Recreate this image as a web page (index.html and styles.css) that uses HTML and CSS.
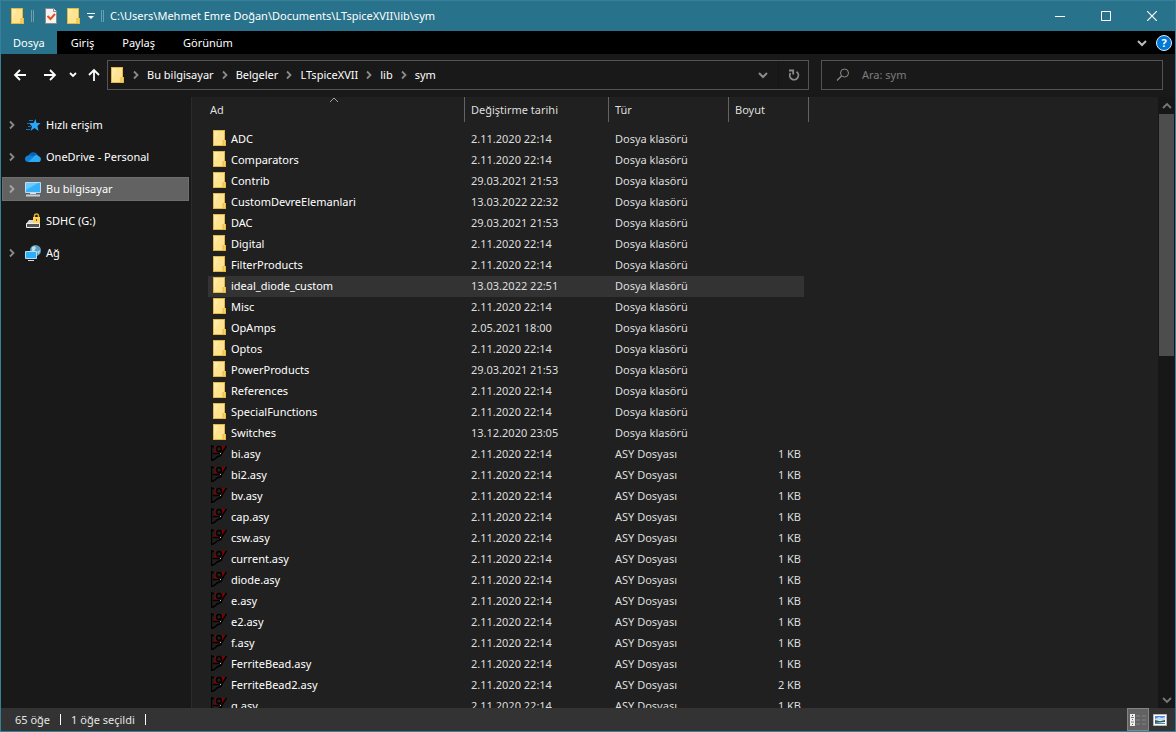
FILE: index.html
```html
<!DOCTYPE html>
<html lang="tr">
<head>
<meta charset="utf-8">
<title>sym</title>
<link rel="stylesheet" href="styles.css">
</head>
<body>
<svg class="defs" aria-hidden="true">
  <symbol id="folder" viewBox="0 0 16 16">
    <path d="M2 0h12v10h1v6H2z" fill="#e3b93f"/>
    <path d="M3 1h10v14H3z" fill="#ffe391"/>
    <path d="M3 1h5L3 12z" fill="#ffeba8"/>
    <path d="M12 10h2v5h-2z" fill="#f7d366"/>
    <path d="M12 10v5" stroke="#e3b93f" fill="none"/>
  </symbol>
  <symbol id="asy" viewBox="0 0 16 16">
    <path d="M2 8l2-2V1h3l-1 3 1 4zM9 1h6l-4 7-1-2 1-3z" fill="#850000"/>
    <path d="M.5 0v16M1 15.500l3-1.500 2-2 4-1.500 1.500-3.500L15.500 1M1 1.500h2M2 8.500h8" fill="none" stroke="#000" stroke-width="1.500"/>
    <circle cx="8" cy="4" r="2.500" fill="#202020" stroke="#000" stroke-width="1.500"/>
    <path d="M9 8h1v1H9z" fill="#c8c8c8"/>
  </symbol>
  <symbol id="chevron" viewBox="0 0 8 10"><path d="M2 1.500L5.500 5 2 8.500" fill="none" stroke="currentColor" stroke-width="1.800"/></symbol>
  <symbol id="down" viewBox="0 0 10 8"><path d="M1 2l4 4 4-4" fill="none" stroke="currentColor" stroke-width="2"/></symbol>
</svg>
<div class="window">
  <header class="titlebar">
    <svg class="icon"><use href="#folder"/></svg>
    <span class="grip"></span>
    <button class="quick" aria-label="Özellikler"><svg class="icon" viewBox="0 0 16 16"><path d="M2.500.5h8l3 3v12h-11z" fill="#f3f3f3" stroke="#8b8b8b"/><path d="M10.500.5v3h3" fill="#fff" stroke="#8b8b8b"/><path d="M4.500 8l3 3 4.500-5" fill="none" stroke="#e8501e" stroke-width="2"/></svg></button>
    <button class="quick" aria-label="Yeni klasör"><svg class="icon"><use href="#folder"/></svg></button>
    <button class="quick customize" aria-label="Özelleştir"><svg class="small" viewBox="0 0 8 8"><path d="M0 1.500h8" stroke="#fff"/><path d="M1 4h6L4 7z" fill="#fff"/></svg></button>
    <span class="grip"></span>
    <h1 class="title">C:\Users\Mehmet Emre Doğan\Documents\LTspiceXVII\lib\sym</h1>
    <button class="caption" aria-label="Simge durumuna küçült"><svg viewBox="0 0 10 10"><path d="M0 5.500h10" stroke="#fff"/></svg></button>
    <button class="caption" aria-label="Ekranı kapla"><svg viewBox="0 0 10 10"><path d="M.5.5h9v9h-9z" fill="none" stroke="#fff"/></svg></button>
    <button class="caption" aria-label="Kapat"><svg viewBox="0 0 10 10"><path d="M0 0l10 10M10 0L0 10" stroke="#fff" stroke-width="1.200"/></svg></button>
  </header>
  <nav class="menubar">
    <button class="menu menu-active">Dosya</button>
    <button class="menu">Giriş</button>
    <button class="menu">Paylaş</button>
    <button class="menu">Görünüm</button>
    <span class="spacer"></span>
    <button class="expand" aria-label="Şeridi genişlet"><svg class="arrow"><use href="#down"/></svg></button>
    <button class="help" aria-label="Yardım">?</button>
  </nav>
  <div class="navbar">
    <div class="history">
      <button class="go" aria-label="Geri"><svg viewBox="0 0 14 12"><path d="M13 6H2M7 1L2 6l5 5" fill="none" stroke="#fff" stroke-width="1.800"/></svg></button>
      <button class="go" aria-label="İleri"><svg viewBox="0 0 14 12"><path d="M1 6h11M7 1l5 5-5 5" fill="none" stroke="#fff" stroke-width="1.800"/></svg></button>
      <button class="recent" aria-label="Son konumlar"><svg viewBox="0 0 10 8"><path d="M2 2l3 3 3-3" fill="none" stroke="#fff" stroke-width="1.800"/></svg></button>
      <button class="up" aria-label="Yukarı"><svg viewBox="0 0 12 14"><path d="M6 13V2M1 7l5-5 5 5" fill="none" stroke="#fff" stroke-width="1.800"/></svg></button>
    </div>
    <div class="address">
      <svg class="icon"><use href="#folder"/></svg>
      <svg class="sep"><use href="#chevron"/></svg>
      <button class="crumb">Bu bilgisayar</button>
      <svg class="sep"><use href="#chevron"/></svg>
      <button class="crumb">Belgeler</button>
      <svg class="sep"><use href="#chevron"/></svg>
      <button class="crumb">LTspiceXVII</button>
      <svg class="sep"><use href="#chevron"/></svg>
      <button class="crumb">lib</button>
      <svg class="sep"><use href="#chevron"/></svg>
      <button class="crumb">sym</button>
      <span class="spacer"></span>
      <button class="tool" aria-label="Önceki konumlar"><svg class="arrow"><use href="#down"/></svg></button>
      <button class="tool refresh" aria-label="Yenile"><svg class="reload" viewBox="0 0 12 12"><path d="M8.500 2.800A4.300 4.300 0 1 1 2.500 4M1 1.500h4.200v4" fill="none" stroke="#8c8c8c" stroke-width="1.800"/></svg></button>
    </div>
    <label class="search">
      <svg class="lens" viewBox="0 0 14 14"><circle cx="8.500" cy="5" r="4" fill="none" stroke="#8a8a8a"/><path d="M5.500 8L1 12.500" stroke="#8a8a8a" stroke-width="1.200"/></svg>
      <input type="text" placeholder="Ara: sym" aria-label="Ara: sym">
    </label>
  </div>
  <div class="body">
    <aside class="tree">
      <a class="node" href="#"><svg class="sep"><use href="#chevron"/></svg><svg class="icon" viewBox="0 0 16 16"><path d="M10.500 2l1 4h4l-3 3 1 5-4-3-4 3 1.500-4.500L4 6h4.500z" fill="#2ba5f7"/><path d="M4 3.500h4M2 6.500h3M3 9.500h3M1 12.500h4" stroke="#1674c4"/></svg>Hızlı erişim</a>
      <a class="node" href="#"><svg class="sep"><use href="#chevron"/></svg><svg class="icon" viewBox="0 0 16 16"><path d="M3.500 7a5 5 0 0 1 9-1.500L9 10z" fill="#0a63b8"/><path d="M3 6.500c3-1 5 1 8 3L3 13C-1 12.500-1 7.500 3 6.500z" fill="#1180dc"/><path d="M8 8.500c1-3 5-3.500 6-1 2.500.5 2.500 5 0 5.500H3z" fill="#2ba9f2"/></svg>OneDrive - Personal</a>
      <a class="node selected" href="#"><svg class="sep"><use href="#chevron"/></svg><svg class="icon" viewBox="0 0 16 16"><path d="M.5 1.500h15v10H.5z" fill="#35b2fb" stroke="#b6ddf3"/><path d="M1 2h12L1 9z" fill="#6bcaff"/><path d="M5 12.500h6" stroke="#e0e6ea"/><path d="M1 14.500h14" stroke="#c3d0da" stroke-width="2"/></svg>Bu bilgisayar</a>
      <a class="node" href="#"><span class="sep"></span><svg class="icon" viewBox="0 0 16 16"><path d="M4 7h9l2 4H1z" fill="#d8d8d8"/><path d="M1.500 10.500h13v4h-13z" fill="#555" stroke="#ededed"/><path d="M9.500 5V3a2 2 0 0 1 4 0v2" fill="none" stroke="#e3b02c" stroke-width="1.500"/><path d="M8 4h7v6H8z" fill="#ffd35a"/><path d="M11 6h1v2h-1z" fill="#6a5010"/></svg>SDHC (G:)</a>
      <a class="node" href="#"><svg class="sep"><use href="#chevron"/></svg><svg class="icon" viewBox="0 0 16 16"><circle cx="10.500" cy="5.500" r="5.500" fill="#5c9dbd"/><path d="M7 2c3-2 5 0 3 3S6 6 7 2zM12 7l3-2-1 4z" fill="#b9deea"/><path d="M.5 6.500h11v7H.5z" fill="#2fadf9" stroke="#b6ddf3"/><path d="M3 15.500h6" stroke="#d5dde2"/></svg>Ağ</a>
    </aside>
    <main class="files">
      <table class="list">
        <colgroup><col class="c-name"><col class="c-date"><col class="c-type"><col class="c-size"></colgroup>
        <thead><tr>
          <th aria-sort="ascending"><button class="head">Ad<svg class="sort" viewBox="0 0 10 6"><path d="M1 5l4-4 4 4" fill="none" stroke="#a0a0a0"/></svg></button></th>
          <th><button class="head">Değiştirme tarihi</button></th>
          <th><button class="head">Tür</button></th>
          <th><button class="head">Boyut</button></th>
        </tr></thead>
        <tbody>
        <tr><td><svg class="icon"><use href="#folder"/></svg>ADC</td><td>2.11.2020 22:14</td><td>Dosya klasörü</td><td></td></tr>
        <tr><td><svg class="icon"><use href="#folder"/></svg>Comparators</td><td>2.11.2020 22:14</td><td>Dosya klasörü</td><td></td></tr>
        <tr><td><svg class="icon"><use href="#folder"/></svg>Contrib</td><td>29.03.2021 21:53</td><td>Dosya klasörü</td><td></td></tr>
        <tr><td><svg class="icon"><use href="#folder"/></svg>CustomDevreElemanlari</td><td>13.03.2022 22:32</td><td>Dosya klasörü</td><td></td></tr>
        <tr><td><svg class="icon"><use href="#folder"/></svg>DAC</td><td>29.03.2021 21:53</td><td>Dosya klasörü</td><td></td></tr>
        <tr><td><svg class="icon"><use href="#folder"/></svg>Digital</td><td>2.11.2020 22:14</td><td>Dosya klasörü</td><td></td></tr>
        <tr><td><svg class="icon"><use href="#folder"/></svg>FilterProducts</td><td>2.11.2020 22:14</td><td>Dosya klasörü</td><td></td></tr>
        <tr class="current"><td><svg class="icon"><use href="#folder"/></svg>ideal_diode_custom</td><td>13.03.2022 22:51</td><td>Dosya klasörü</td><td></td></tr>
        <tr><td><svg class="icon"><use href="#folder"/></svg>Misc</td><td>2.11.2020 22:14</td><td>Dosya klasörü</td><td></td></tr>
        <tr><td><svg class="icon"><use href="#folder"/></svg>OpAmps</td><td>2.05.2021 18:00</td><td>Dosya klasörü</td><td></td></tr>
        <tr><td><svg class="icon"><use href="#folder"/></svg>Optos</td><td>2.11.2020 22:14</td><td>Dosya klasörü</td><td></td></tr>
        <tr><td><svg class="icon"><use href="#folder"/></svg>PowerProducts</td><td>29.03.2021 21:53</td><td>Dosya klasörü</td><td></td></tr>
        <tr><td><svg class="icon"><use href="#folder"/></svg>References</td><td>2.11.2020 22:14</td><td>Dosya klasörü</td><td></td></tr>
        <tr><td><svg class="icon"><use href="#folder"/></svg>SpecialFunctions</td><td>2.11.2020 22:14</td><td>Dosya klasörü</td><td></td></tr>
        <tr><td><svg class="icon"><use href="#folder"/></svg>Switches</td><td>13.12.2020 23:05</td><td>Dosya klasörü</td><td></td></tr>
        <tr><td><svg class="icon"><use href="#asy"/></svg>bi.asy</td><td>2.11.2020 22:14</td><td>ASY Dosyası</td><td>1 KB</td></tr>
        <tr><td><svg class="icon"><use href="#asy"/></svg>bi2.asy</td><td>2.11.2020 22:14</td><td>ASY Dosyası</td><td>1 KB</td></tr>
        <tr><td><svg class="icon"><use href="#asy"/></svg>bv.asy</td><td>2.11.2020 22:14</td><td>ASY Dosyası</td><td>1 KB</td></tr>
        <tr><td><svg class="icon"><use href="#asy"/></svg>cap.asy</td><td>2.11.2020 22:14</td><td>ASY Dosyası</td><td>1 KB</td></tr>
        <tr><td><svg class="icon"><use href="#asy"/></svg>csw.asy</td><td>2.11.2020 22:14</td><td>ASY Dosyası</td><td>1 KB</td></tr>
        <tr><td><svg class="icon"><use href="#asy"/></svg>current.asy</td><td>2.11.2020 22:14</td><td>ASY Dosyası</td><td>1 KB</td></tr>
        <tr><td><svg class="icon"><use href="#asy"/></svg>diode.asy</td><td>2.11.2020 22:14</td><td>ASY Dosyası</td><td>1 KB</td></tr>
        <tr><td><svg class="icon"><use href="#asy"/></svg>e.asy</td><td>2.11.2020 22:14</td><td>ASY Dosyası</td><td>1 KB</td></tr>
        <tr><td><svg class="icon"><use href="#asy"/></svg>e2.asy</td><td>2.11.2020 22:14</td><td>ASY Dosyası</td><td>1 KB</td></tr>
        <tr><td><svg class="icon"><use href="#asy"/></svg>f.asy</td><td>2.11.2020 22:14</td><td>ASY Dosyası</td><td>1 KB</td></tr>
        <tr><td><svg class="icon"><use href="#asy"/></svg>FerriteBead.asy</td><td>2.11.2020 22:14</td><td>ASY Dosyası</td><td>1 KB</td></tr>
        <tr><td><svg class="icon"><use href="#asy"/></svg>FerriteBead2.asy</td><td>2.11.2020 22:14</td><td>ASY Dosyası</td><td>2 KB</td></tr>
        <tr><td><svg class="icon"><use href="#asy"/></svg>g.asy</td><td>2.11.2020 22:14</td><td>ASY Dosyası</td><td>1 KB</td></tr>
        </tbody>
      </table>
    </main>
    <div class="scrollbar">
      <button class="scroll-step" aria-label="Yukarı kaydır"><svg viewBox="0 0 10 8"><path d="M1 6l4-4 4 4" fill="none" stroke="#777" stroke-width="1.800"/></svg></button>
      <div class="track"><div class="thumb"></div></div>
      <button class="scroll-step" aria-label="Aşağı kaydır"><svg viewBox="0 0 10 8"><path d="M1 2l4 4 4-4" fill="none" stroke="#777" stroke-width="1.800"/></svg></button>
    </div>
  </div>
  <footer class="status">
    <span class="info">65 öğe</span>
    <span class="info">1 öğe seçildi</span>
    <span class="spacer"></span>
    <button class="view view-on" aria-label="Ayrıntılar"><svg viewBox="0 0 16 14"><path d="M0 1h5v12H0z" fill="#eee"/><path d="M1 4.500h3M1 9h3" stroke="#777"/><path d="M2 2h1v1H2z" fill="#245"/><path d="M2 6h1v1H2z" fill="#37c"/><path d="M2 11h1v1H2z" fill="#b22"/><path d="M6 3h4M12 3h4M6 7h4M12 7h4M6 11h4M12 11h4" stroke="#858585"/></svg></button>
    <button class="view" aria-label="Büyük simgeler"><svg viewBox="0 0 14 12"><path d="M.5.5h13v11H.5z" fill="#fff" stroke="#bbb"/><path d="M2 2h10v4H2z" fill="#4b8fe0"/><path d="M2 5l4-2 3 1 3-1v3H2z" fill="#c5dcf2"/><path d="M2 6l5 1 5-1v2L2 9z" fill="#2f5f5c"/><path d="M2 9.500h10" stroke="#4f86b8"/></svg></button>
  </footer>
</div>
</body>
</html>
```
FILE: styles.css
```css
* { box-sizing: border-box; }
body {
  margin: 0;
  font: 11px/16px "Noto Sans", "Open Sans", sans-serif;
  color: #fff;
  background: #191919;
}
button {
  margin: 0;
  padding: 0;
  border: 0;
  background: none;
  color: inherit;
  font: inherit;
}
svg { display: block; flex: none; }
.defs { position: absolute; width: 0; height: 0; }
.icon { width: 16px; height: 16px; }
.spacer { flex: 1; }
.arrow { width: 10px; height: 8px; }
.sep { flex: none; width: 8px; height: 10px; color: #8a8a8a; }

.window {
  display: flex;
  flex-direction: column;
  height: 100vh;
  border: 1px solid #37809a;
}

.titlebar {
  display: flex;
  align-items: center;
  height: 30px;
  padding-left: 8px;
  background: #28728b;
}
.grip {
  width: 3px;
  height: 12px;
  margin: 0 6px;
  border: 1px solid #6f9fae;
  border-width: 0 1px;
}
.quick { margin-left: 3px; }
.quick + .quick { margin-left: 6px; }
.small { width: 8px; height: 8px; }
.title {
  flex: 1;
  margin: 0;
  font-size: 11px;
  font-weight: 400;
  white-space: nowrap;
}
.caption {
  display: flex;
  align-items: center;
  justify-content: center;
  width: 46px;
  height: 30px;
}
.caption svg { width: 10px; height: 10px; }

.menubar {
  display: flex;
  align-items: center;
  height: 23px;
  background: #000;
}
.menu { height: 23px; padding: 0 14px; }
.menu-active { padding: 0 12px; background: #28728b; }
.expand { padding: 0 9px; color: #bbb; }
.help {
  width: 16px;
  height: 16px;
  margin-right: 3px;
  border: 1px solid #dce9f5;
  border-radius: 50%;
  background: #0078d7;
  font-weight: 700;
  line-height: 14px;
}

.navbar {
  display: flex;
  gap: 12px;
  height: 43px;
  padding: 6px 12px 7px 12px;
}
.history { display: flex; align-items: center; width: 82px; gap: 10px; }
.go { width: 14px; margin-right: 6px; }
.go svg { width: 14px; height: 12px; }
.recent svg { width: 10px; height: 8px; }
.go + .recent { margin-left: -5px; }
.up svg { width: 12px; height: 14px; }
.address {
  display: flex;
  flex: 1;
  align-items: center;
  border: 1px solid #535353;
  padding-left: 1px;
}
.address .sep { margin: 0 7px; }
.crumb { white-space: nowrap; }
.tool {
  display: flex;
  align-items: center;
  justify-content: center;
  width: 30px;
  height: 28px;
  color: #8c8c8c;
}
.refresh { border-left: 1px solid #141414; }
.reload { width: 12px; height: 12px; }
.search {
  display: flex;
  flex: 0 1 342px;
  align-items: center;
  gap: 12px;
  padding-left: 14px;
  border: 1px solid #535353;
}
.lens { width: 14px; height: 14px; }
.search input {
  flex: 1;
  min-width: 0;
  padding: 0;
  border: 0;
  outline: 0;
  background: none;
  color: #fff;
  font: inherit;
}
.search input::placeholder { color: #7d7d7d; opacity: 1; }

.body { display: flex; flex: 1; min-height: 0; }
.tree {
  display: flex;
  flex: none;
  flex-direction: column;
  gap: 8px;
  width: 191px;
  padding: 16px 2px 0 1px;
  border-right: 1px solid #2b2b2b;
}
.node {
  display: flex;
  align-items: center;
  height: 24px;
  padding-left: 5px;
  border: 1px solid transparent;
  color: #fff;
  text-decoration: none;
  white-space: nowrap;
}
.node .icon { margin: 0 5px 0 9px; }
.selected { background: #626262; border-color: #6e6e6e; }
.selected .sep { color: #a6a6a6; }

.files {
  flex: 1;
  min-width: 0;
  overflow: hidden;
  padding-left: 12px;
  background: #202020;
}
.list {
  width: 605px;
  table-layout: fixed;
  border-collapse: separate;
  border-spacing: 0;
}
.c-name { width: 261px; }
.c-date { width: 144px; }
.c-type { width: 120px; }
.c-size { width: 80px; }
.list th { height: 32px; padding: 0; vertical-align: top; font-weight: 400; }
.head {
  position: relative;
  width: 100%;
  height: 25px;
  padding-left: 6px;
  border-right: 1px solid #636363;
  color: #dedede;
  text-align: left;
}
.sort {
  position: absolute;
  top: 0;
  left: 50%;
  width: 10px;
  height: 6px;
  margin-left: -5px;
}
.list td {
  height: 21px;
  padding: 0 0 0 6px;
  background-clip: padding-box;
  color: #dedede;
  line-height: 19px;
  vertical-align: top;
  white-space: nowrap;
}
.list td:first-child {
  padding-left: 3px;
  border-left: 4px solid transparent;
  color: #fff;
}
.list td:last-child {
  padding-right: 3px;
  border-right: 5px solid transparent;
  text-align: right;
}
.list .icon { float: left; margin: 1px 4px 0 0; }
.current td { background-color: #333; }

.scrollbar {
  display: flex;
  flex: none;
  flex-direction: column;
  width: 17px;
  background: #171717;
}
.scroll-step {
  display: flex;
  align-items: center;
  justify-content: center;
  height: 17px;
}
.scroll-step svg { width: 10px; height: 8px; }
.track { flex: 1; padding: 0 1px; }
.thumb { height: 42%; background: #4d4d4d; }

.status {
  display: flex;
  align-items: center;
  height: 23px;
  padding: 0 4px 0 14px;
  background: #333;
}
.info { display: flex; align-items: center; color: #e6e6e6; }
.info::after {
  width: 1px;
  height: 11px;
  margin: 0 10px;
  background: #fff;
  content: "";
}
.view {
  display: flex;
  align-items: center;
  justify-content: center;
  width: 22px;
  height: 23px;
}
.view-on { border: 1px solid #858585; background: #626262; }
.view svg { width: 14px; height: 12px; }
.view-on svg { width: 16px; height: 14px; }
```
